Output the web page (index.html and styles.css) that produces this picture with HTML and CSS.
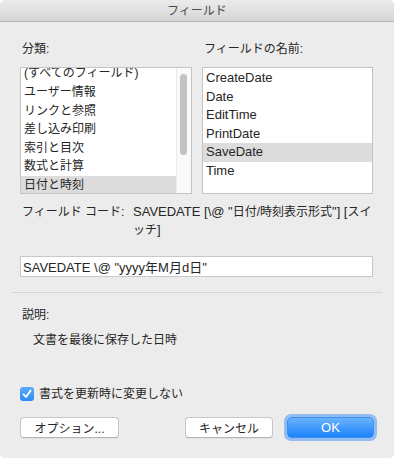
FILE: index.html
```html
<!DOCTYPE html>
<html lang="ja">
<head>
<meta charset="UTF-8">
<meta name="viewport" content="width=device-width, initial-scale=1.0">
<title>フィールド</title>
<link rel="stylesheet" href="styles.css">
</head>
<body>

<div class="window">
    <div class="titlebar ja">フィールド</div>

    <div class="content">
        <div class="lists">
            <div class="col">
                <div class="label ja">分類:</div>
                <div class="listbox">
                    <div class="items scrolled ja">
                        <div class="item">(すべてのフィールド)</div>
                        <div class="item">ユーザー情報</div>
                        <div class="item">リンクと参照</div>
                        <div class="item">差し込み印刷</div>
                        <div class="item">索引と目次</div>
                        <div class="item">数式と計算</div>
                        <div class="item selected">日付と時刻</div>
                    </div>
                    <div class="scrollbar"><div class="thumb"></div></div>
                </div>
            </div>
            <div class="col">
                <div class="label ja">フィールドの名前:</div>
                <div class="listbox">
                    <div class="items names">
                        <div class="item">CreateDate</div>
                        <div class="item">Date</div>
                        <div class="item">EditTime</div>
                        <div class="item">PrintDate</div>
                        <div class="item selected">SaveDate</div>
                        <div class="item">Time</div>
                    </div>
                </div>
            </div>
        </div>

        <div class="code-row">
            <div class="code-label ja">フィールド コード:</div>
            <div class="code-value">SAVEDATE [\@ "<span class="ja">日付/時刻表示形式</span>"] [<span class="ja">スイ</span><br><span class="ja">ッチ</span>]</div>
        </div>

        <input class="code-input" type="text" value='SAVEDATE \@ "yyyy年M月d日"'>

        <hr class="sep">

        <div class="label desc-label ja">説明:</div>
        <div class="desc ja">文書を最後に保存した日時</div>

        <label class="check ja">
            <span class="box">
                <svg width="10" height="10" viewBox="0 0 10 10"><path d="M1.6 5.4 L4 8 L8.6 1.6" fill="none" stroke="#fff" stroke-width="1.8" stroke-linecap="round" stroke-linejoin="round"/></svg>
            </span>
            書式を更新時に変更しない
        </label>

        <div class="buttons">
            <button class="btn options ja">オプション...</button>
            <div class="right">
                <button class="btn cancel ja">キャンセル</button>
                <button class="btn ok">OK</button>
            </div>
        </div>
    </div>
</div>

</body>
</html>
```

FILE: styles.css
```css
body {
    margin: 0;
    background-color: #fff;
    font-family: "Liberation Sans", "Noto Sans CJK JP", sans-serif;
    font-size: 13px;
    color: #262626;
}

.ja {
    font-size: 12px;
}

.window {
    width: 394px;
    height: 458px;
    background-color: #ececec;
    border-radius: 5px;
    overflow: hidden;
}

.titlebar {
    height: 21px;
    line-height: 22px;
    text-align: center;
    color: #4a4a4a;
    background: linear-gradient(#ebebeb, #d6d6d6);
    border-bottom: 1px solid #b5b5b5;
}

.content {
    padding: 0 20px;
}

.lists {
    display: grid;
    grid-template-columns: 172px 171px;
    column-gap: 10px;
    margin-top: 18px;
}

.label {
    line-height: 18px;
    padding-left: 2px;
    margin-bottom: 9px;
}

.listbox {
    display: flex;
    height: 125px;
    background-color: #fff;
    border: 1px solid #c4c4c4;
    overflow: hidden;
}

.items {
    flex: 1;
}

.item {
    height: 18.6px;
    line-height: 18.6px;
    padding-left: 3px;
    white-space: nowrap;
}

.scrolled {
    margin-top: -3.6px;
}

.names {
    padding-top: 1px;
}

.names .item {
    height: 18.5px;
    line-height: 18.5px;
}

.item.selected {
    background-color: #dcdcdc;
}

.scrollbar {
    width: 14px;
    background-color: #fafafa;
    border-left: 1px solid #e9e9e9;
    padding-top: 6px;
}

.thumb {
    width: 7px;
    height: 81px;
    margin-left: 3px;
    border-radius: 4px;
    background-color: #c2c2c2;
}

.code-row {
    display: flex;
    margin-top: 9px;
    line-height: 18px;
}

.code-label {
    width: 111px;
    padding-left: 2px;
    flex-shrink: 0;
    white-space: nowrap;
}

.code-value {
    white-space: nowrap;
}

.code-input {
    display: block;
    width: 353px;
    height: 21px;
    margin-top: 17px;
    padding: 0 2px;
    border: 1px solid #c8c8c8;
    box-sizing: border-box;
    font-family: inherit;
    font-size: 13px;
    color: #262626;
    background-color: #fff;
    outline: none;
}

.sep {
    margin: 15px -8px 0;
    border: none;
    border-top: 1px solid #d4d4d4;
}

.desc-label {
    margin-top: 13px;
    margin-bottom: 7px;
}

.desc {
    padding-left: 13px;
    line-height: 18px;
}

.check {
    display: flex;
    align-items: center;
    gap: 5px;
    margin-top: 36px;
    line-height: 18px;
}

.box {
    width: 14px;
    height: 14px;
    border-radius: 3px;
    background: linear-gradient(#5eaafc, #2a8cf6);
    display: flex;
    align-items: center;
    justify-content: center;
}

.buttons {
    display: flex;
    justify-content: space-between;
    margin-top: 14px;
}

.right {
    display: flex;
    gap: 14px;
}

.btn {
    height: 21px;
    padding: 0;
    border: 1px solid #c6c6c6;
    border-bottom-color: #b4b4b4;
    border-radius: 4px;
    background-color: #fff;
    font-family: "Liberation Sans", "Noto Sans CJK JP", sans-serif;
    color: #262626;
    box-shadow: 0 1px 0 rgba(0, 0, 0, 0.04);
}

.ok {
    width: 87px;
    font-size: 13px;
    color: #fff;
    border-color: #3d8ff3;
    background: linear-gradient(#6ab3fb, #1c83fb);
    box-shadow: 0 0 0 3px #93bdf0;
}

.options {
    width: 99px;
}

.cancel {
    width: 88px;
}
```
